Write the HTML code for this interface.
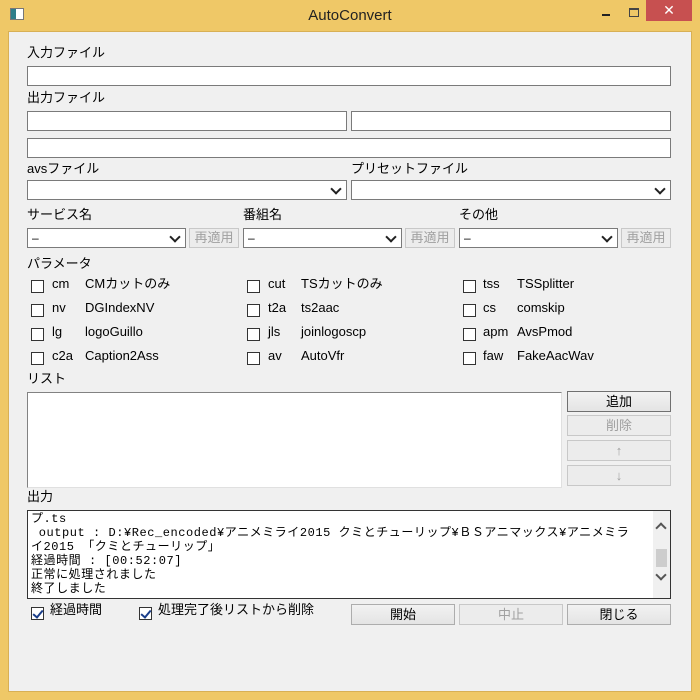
<!DOCTYPE html>
<html><head><meta charset="utf-8"><style>
*{box-sizing:border-box;margin:0;padding:0}
body{width:700px;height:700px;background:#efc867;position:relative;overflow:hidden;font-family:"Liberation Sans","Noto Sans CJK JP",sans-serif;font-size:13px;color:#000}
.a{position:absolute}
#client{left:8px;top:31px;width:684px;height:661px;background:#f0f0f0;border:1px solid #d8b055}
.in{position:absolute;background:#fff;border:1px solid #7a7a7a;height:20px}
.lb{position:absolute;font-size:13px;line-height:16px;white-space:nowrap}
.cb{position:absolute;background:#fff;border:1px solid #7a7a7a;height:20px;font-size:12px;line-height:18px;padding-left:4px}
.cb:after{content:"";position:absolute;right:6px;top:4px;width:6px;height:6px;border-right:2px solid #222;border-bottom:2px solid #222;transform:rotate(45deg)}
.bt{position:absolute;height:21px;border:1px solid #adadad;background:linear-gradient(#f2f2f2,#e4e4e4);text-align:center;font-size:13px;line-height:19px;color:#000}
.dis{color:#a0a0a0;border-color:#c8c8c8;background:#ececec}
.ck{position:absolute;width:13px;height:13px;background:#fff;border:1px solid #333}
.ck.on:after{content:"";position:absolute;left:3px;top:0px;width:4px;height:8px;border-right:2px solid #1a3e8a;border-bottom:2px solid #1a3e8a;transform:rotate(40deg)}
.mono{font-family:"Liberation Mono","Noto Sans CJK JP",monospace;font-size:12px;line-height:14px;white-space:pre;letter-spacing:0.55px}
</style></head><body>
<div class="a" style="left:10px;top:8px;width:14px;height:12px;border:1px solid #777;background:linear-gradient(90deg,#2e7d8a 40%,#fff 40%)"></div>
<div class="a" style="left:0;top:7px;width:700px;text-align:center;font-size:15px;color:#222">AutoConvert</div>
<div class="a" style="left:602px;top:14px;width:8px;height:2px;background:#222"></div>
<div class="a" style="left:629px;top:8px;width:10px;height:9px;border:1px solid #444;border-top-width:2px"></div>
<div class="a" style="left:646px;top:0;width:46px;height:21px;background:#c75050;color:#fff;text-align:center;font-size:14px;line-height:20px">✕</div>
<div class="a" id="client"></div>

<div class="lb" style="left:27px;top:45px">入力ファイル</div>
<div class="in" style="left:27px;top:66px;width:644px"></div>
<div class="lb" style="left:27px;top:90px">出力ファイル</div>
<div class="in" style="left:27px;top:111px;width:320px"></div>
<div class="in" style="left:351px;top:111px;width:320px"></div>
<div class="in" style="left:27px;top:138px;width:644px"></div>
<div class="lb" style="left:27px;top:161px">avsファイル</div>
<div class="lb" style="left:351px;top:161px">プリセットファイル</div>
<div class="cb" style="left:27px;top:180px;width:320px"></div>
<div class="cb" style="left:351px;top:180px;width:320px"></div>

<div class="lb" style="left:27px;top:207px">サービス名</div>
<div class="lb" style="left:243px;top:207px">番組名</div>
<div class="lb" style="left:459px;top:207px">その他</div>
<div class="cb" style="left:27px;top:228px;width:159px">–</div>
<div class="bt dis" style="left:189px;top:228px;width:50px;height:20px;line-height:18px">再適用</div>
<div class="cb" style="left:243px;top:228px;width:159px">–</div>
<div class="bt dis" style="left:405px;top:228px;width:50px;height:20px;line-height:18px">再適用</div>
<div class="cb" style="left:459px;top:228px;width:159px">–</div>
<div class="bt dis" style="left:621px;top:228px;width:50px;height:20px;line-height:18px">再適用</div>

<div class="lb" style="left:27px;top:256px">パラメータ</div>

<div class="ck" style="left:31px;top:280px"></div><div class="lb" style="left:52px;top:276px">cm</div><div class="lb" style="left:85px;top:276px">CMカットのみ</div>
<div class="ck" style="left:31px;top:304px"></div><div class="lb" style="left:52px;top:300px">nv</div><div class="lb" style="left:85px;top:300px">DGIndexNV</div>
<div class="ck" style="left:31px;top:328px"></div><div class="lb" style="left:52px;top:324px">lg</div><div class="lb" style="left:85px;top:324px">logoGuillo</div>
<div class="ck" style="left:31px;top:352px"></div><div class="lb" style="left:52px;top:348px">c2a</div><div class="lb" style="left:85px;top:348px">Caption2Ass</div>

<div class="ck" style="left:247px;top:280px"></div><div class="lb" style="left:268px;top:276px">cut</div><div class="lb" style="left:301px;top:276px">TSカットのみ</div>
<div class="ck" style="left:247px;top:304px"></div><div class="lb" style="left:268px;top:300px">t2a</div><div class="lb" style="left:301px;top:300px">ts2aac</div>
<div class="ck" style="left:247px;top:328px"></div><div class="lb" style="left:268px;top:324px">jls</div><div class="lb" style="left:301px;top:324px">joinlogoscp</div>
<div class="ck" style="left:247px;top:352px"></div><div class="lb" style="left:268px;top:348px">av</div><div class="lb" style="left:301px;top:348px">AutoVfr</div>

<div class="ck" style="left:463px;top:280px"></div><div class="lb" style="left:483px;top:276px">tss</div><div class="lb" style="left:517px;top:276px">TSSplitter</div>
<div class="ck" style="left:463px;top:304px"></div><div class="lb" style="left:483px;top:300px">cs</div><div class="lb" style="left:517px;top:300px">comskip</div>
<div class="ck" style="left:463px;top:328px"></div><div class="lb" style="left:483px;top:324px">apm</div><div class="lb" style="left:517px;top:324px">AvsPmod</div>
<div class="ck" style="left:463px;top:352px"></div><div class="lb" style="left:483px;top:348px">faw</div><div class="lb" style="left:517px;top:348px">FakeAacWav</div>

<div class="lb" style="left:27px;top:371px">リスト</div>
<div class="a" style="left:27px;top:392px;width:535px;height:96px;background:#fff;border:1px solid #828282;border-right-color:#e0e0e0;border-bottom-color:#e0e0e0"></div>
<div class="bt" style="left:567px;top:391px;width:104px;border-color:#707070">追加</div>
<div class="bt dis" style="left:567px;top:415px;width:104px">削除</div>
<div class="bt dis" style="left:567px;top:440px;width:104px">↑</div>
<div class="bt dis" style="left:567px;top:465px;width:104px">↓</div>

<div class="lb" style="left:27px;top:489px">出力</div>
<div class="a" style="left:27px;top:510px;width:644px;height:89px;background:#fff;border:1px solid #333;overflow:hidden">
<div class="mono" style="position:absolute;left:3px;top:1px">プ.ts
 output : D:¥Rec_encoded¥アニメミライ2015 クミとチューリップ¥ＢＳアニマックス¥アニメミラ
イ2015 「クミとチューリップ」
経過時間 : [00:52:07]
正常に処理されました
終了しました</div>
<div class="a" style="left:625px;top:0;width:17px;height:87px;background:#f0f0f0"></div>
<div class="a" style="left:628px;top:38px;width:11px;height:18px;background:#cdcdcd"></div>
<div class="a" style="left:629px;top:13px;width:8px;height:8px;border-left:2px solid #555;border-top:2px solid #555;transform:rotate(45deg)"></div>
<div class="a" style="left:629px;top:60px;width:8px;height:8px;border-right:2px solid #555;border-bottom:2px solid #555;transform:rotate(45deg)"></div>
</div>

<div class="ck on" style="left:31px;top:607px"></div><div class="lb" style="left:50px;top:602px">経過時間</div>
<div class="ck on" style="left:139px;top:607px"></div><div class="lb" style="left:158px;top:602px">処理完了後リストから削除</div>
<div class="bt" style="left:351px;top:604px;width:104px">開始</div>
<div class="bt dis" style="left:459px;top:604px;width:104px">中止</div>
<div class="bt" style="left:567px;top:604px;width:104px">閉じる</div>
</body></html>
